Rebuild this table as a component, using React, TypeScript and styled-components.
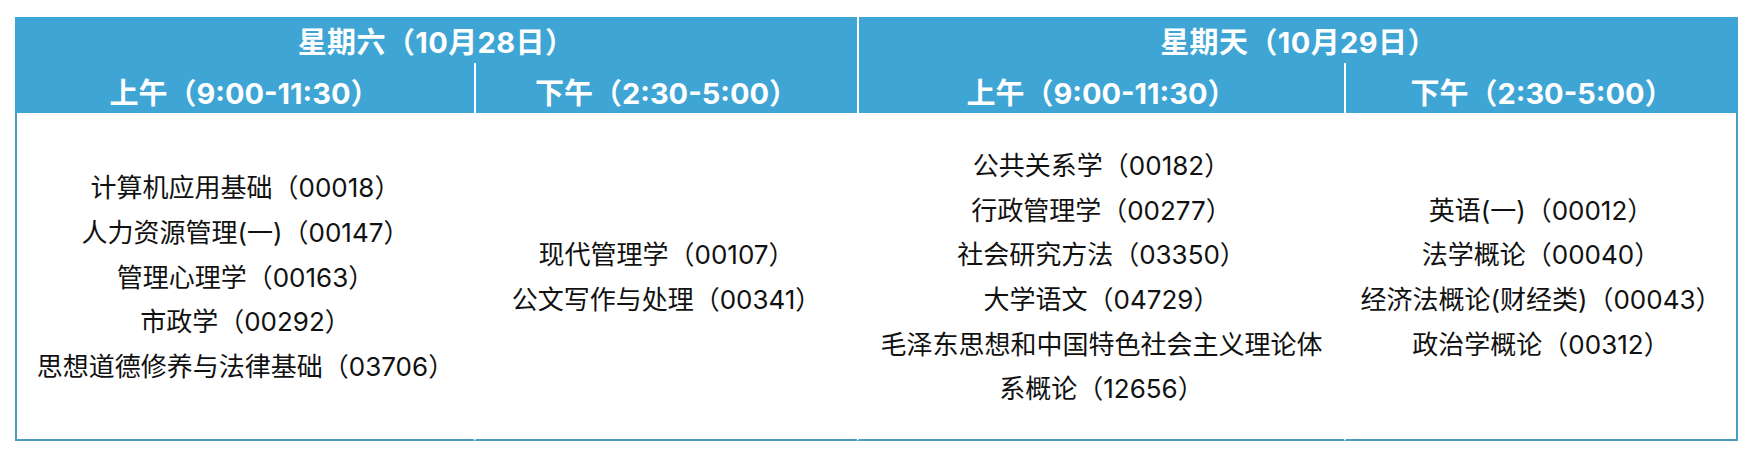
import styled, { createGlobalStyle } from 'styled-components';

const GlobalStyle = createGlobalStyle`
  html, body {
    margin: 0;
    padding: 0;
    background: #ffffff;
  }
  body {
    font-family: Inter, "Noto Sans CJK SC", sans-serif;
  }
`;

const Page = styled.div`
  padding: 17px 0 0 15px;
  width: 1754px;
  height: 456px;
  box-sizing: border-box;
`;

const Table = styled.div`
  display: grid;
  grid-template-columns: 459px 383px 487px 394px;
  grid-template-rows: 46px 50px 328px;
  width: 1723px;
`;

const DayCell = styled.div<{ $divider?: boolean }>`
  grid-column: span 2;
  display: flex;
  align-items: center;
  justify-content: center;
  background: #3ea5d5;
  color: #ffffff;
  font-size: 29px;
  font-weight: 700;
  letter-spacing: 0.4px;
  border-left: ${({ $divider }) => ($divider ? '2px solid #ffffff' : 'none')};
`;

const SlotCell = styled.div<{ $divider?: boolean }>`
  display: flex;
  align-items: center;
  justify-content: center;
  padding-top: 6px;
  background: #3ea5d5;
  color: #ffffff;
  font-size: 29px;
  font-weight: 700;
  border-left: ${({ $divider }) => ($divider ? '2px solid #ffffff' : 'none')};
`;

const BodyCell = styled.div<{ $first?: boolean; $last?: boolean }>`
  display: flex;
  flex-direction: column;
  align-items: center;
  justify-content: center;
  padding-top: 4px;
  background: #ffffff;
  color: #111111;
  font-size: 26px;
  line-height: 44.7px;
  text-align: center;
  border-bottom: 2px solid #4c9cc1;
  border-left: 2px solid ${({ $first }) => ($first ? '#4c9cc1' : '#ffffff')};
  border-right: ${({ $last }) => ($last ? '2px solid #4c9cc1' : 'none')};
`;

const Course = styled.div`
  white-space: nowrap;
`;

const days = [
  { label: '星期六（10月28日）' },
  { label: '星期天（10月29日）' },
];

const slots = ['上午（9:00-11:30）', '下午（2:30-5:00）', '上午（9:00-11:30）', '下午（2:30-5:00）'];

const courses = [
  [
    '计算机应用基础（00018）',
    '人力资源管理(一)（00147）',
    '管理心理学（00163）',
    '市政学（00292）',
    '思想道德修养与法律基础（03706）',
  ],
  ['现代管理学（00107）', '公文写作与处理（00341）'],
  [
    '公共关系学（00182）',
    '行政管理学（00277）',
    '社会研究方法（03350）',
    '大学语文（04729）',
    '毛泽东思想和中国特色社会主义理论体',
    '系概论（12656）',
  ],
  ['英语(一)（00012）', '法学概论（00040）', '经济法概论(财经类)（00043）', '政治学概论（00312）'],
];

const App = () => {
  return (
    <Page>
      <GlobalStyle />
      <Table>
        {days.map((day, i) => (
          <DayCell key={day.label} $divider={i > 0}>
            {day.label}
          </DayCell>
        ))}
        {slots.map((slot, i) => (
          <SlotCell key={i} $divider={i > 0}>
            {slot}
          </SlotCell>
        ))}
        {courses.map((list, i) => (
          <BodyCell key={i} $first={i === 0} $last={i === courses.length - 1}>
            {list.map((c) => (
              <Course key={c}>{c}</Course>
            ))}
          </BodyCell>
        ))}
      </Table>
    </Page>
  );
};

export default App;
